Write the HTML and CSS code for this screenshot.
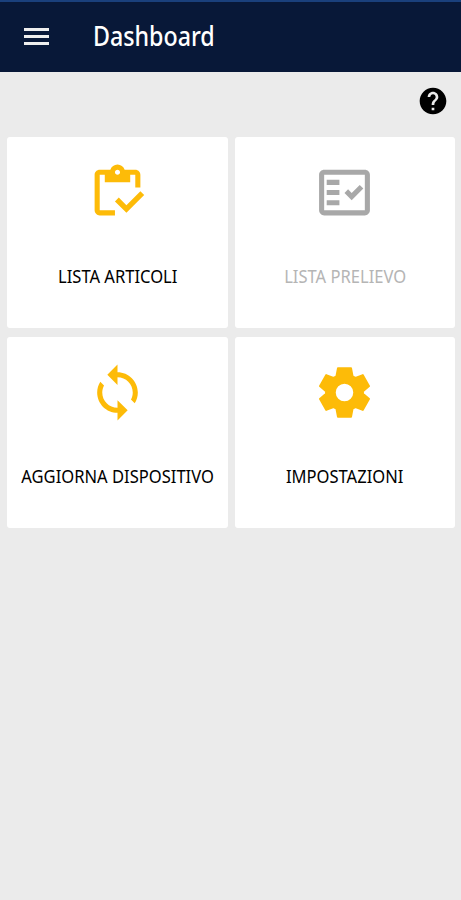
FILE: index.html
```html
<!DOCTYPE html>
<html lang="it">
<head>
    <meta charset="UTF-8">
    <meta name="viewport" content="width=device-width, initial-scale=1.0">
    <title>Dashboard</title>
    <link rel="stylesheet" href="styles.css">
</head>
<body>
    <header class="topbar">
        <button class="menu" aria-label="Menu">
            <span></span>
            <span></span>
            <span></span>
        </button>
        <h1>Dashboard</h1>
    </header>

    <div class="help">
        <svg viewBox="0 0 24 24"><path d="M12 2C6.48 2 2 6.48 2 12s4.48 10 10 10 10-4.48 10-10S17.52 2 12 2zm1 17h-2v-2h2v2zm2.07-7.75l-.9.92C13.45 12.9 13 13.5 13 15h-2v-.5c0-1.1.45-2.1 1.17-2.83l1.24-1.26c.37-.36.59-.86.59-1.41 0-1.1-.9-2-2-2s-2 .9-2 2H8c0-2.21 1.79-4 4-4s4 1.79 4 4c0 .88-.36 1.68-.93 2.25z"/></svg>
    </div>

    <main class="grid">
        <a class="card">
            <svg viewBox="0 0 24 24">
                <path d="M5 5h2v3h10V5h2v5h2V5c0-1.1-.9-2-2-2h-4.18C14.4 1.84 13.3 1 12 1s-2.4.84-2.82 2H5c-1.1 0-2 .9-2 2v14c0 1.1.9 2 2 2h6v-2H5V5zm7-2c.55 0 1 .45 1 1s-.45 1-1 1-1-.45-1-1 .45-1 1-1z"/>
                <path d="M21 11.5L15.51 17l-3.01-3-1.5 1.5 4.51 4.5 6.99-7z"/>
            </svg>
            <span class="label">LISTA ARTICOLI</span>
        </a>
        <a class="card disabled">
            <svg viewBox="0 0 24 24">
                <path d="M20 3H4c-1.1 0-2 .9-2 2v14c0 1.1.9 2 2 2h16c1.1 0 2-.9 2-2V5c0-1.1-.9-2-2-2zm0 16H4V5h16v14z"/>
                <path d="M19.41 10.42L17.99 9l-3.17 3.17-1.41-1.42L12 12.16 14.82 15z"/>
                <path d="M5 7h5v2H5zM5 11h5v2H5zM5 15h5v2H5z"/>
            </svg>
            <span class="label">LISTA PRELIEVO</span>
        </a>
        <a class="card">
            <svg viewBox="0 0 24 24"><path d="M12 4V1L8 5l4 4V6c3.31 0 6 2.69 6 6 0 1.01-.25 1.97-.7 2.8l1.46 1.46C19.54 15.03 20 13.57 20 12c0-4.42-3.58-8-8-8zm0 14c-3.31 0-6-2.69-6-6 0-1.01.25-1.97.7-2.8L5.24 7.74C4.46 8.97 4 10.43 4 12c0 4.42 3.58 8 8 8v3l4-4-4-4v3z"/></svg>
            <span class="label">AGGIORNA DISPOSITIVO</span>
        </a>
        <a class="card">
            <svg class="gear" viewBox="0 0 24 24"><path fill-rule="evenodd" d="M9.4 2.4h5.2l.6 3.2 1.1.6 2.9-1.1 2.5 4.4-2.4 2v1l2.4 2-2.5 4.4-2.9-1.1-1.1.6-.6 3.2H9.4l-.6-3.2-1.1-.6-2.9 1.1-2.5-4.4 2.4-2v-1l-2.4-2 2.5-4.4 2.9 1.1 1.1-.6zM12 8.2a3.8 3.8 0 1 0 0 7.6 3.8 3.8 0 0 0 0-7.6z"/></svg>
            <span class="label">IMPOSTAZIONI</span>
        </a>
    </main>
</body>
</html>
```
FILE: styles.css
```css
* {
    box-sizing: border-box;
}
body {
    margin: 0;
    min-height: 100vh;
    background-color: #ebebeb;
    font-family: "Noto Sans", "Open Sans", sans-serif;
}
.topbar {
    display: flex;
    align-items: center;
    height: 72px;
    padding: 0 0 2px 24px;
    border-top: 2px solid #1a407c;
    background-color: #081838;
    color: #fff;
}
.menu {
    display: flex;
    flex-direction: column;
    gap: 4px;
    width: 25px;
    margin-right: 44px;
    padding: 0;
    border: none;
    background: none;
}
.menu span {
    height: 3px;
    background-color: #eee;
}
.topbar h1 {
    margin: 0;
    font-size: 27px;
    font-weight: 500;
    line-height: 36px;
    transform: scaleX(0.86);
    transform-origin: left;
}
.help {
    display: flex;
    justify-content: flex-end;
    height: 65px;
    padding: 13px 12px 0 0;
}
.help svg {
    width: 32px;
    height: 32px;
}
.grid {
    display: grid;
    grid-template-columns: 1fr 1fr;
    grid-auto-rows: 191px;
    gap: 9px 7px;
    padding: 0 6px 0 7px;
}
.card {
    display: flex;
    flex-direction: column;
    align-items: center;
    padding-top: 25px;
    border-radius: 3px;
    background-color: #fff;
    color: #000;
}
.card svg {
    width: 61px;
    height: 61px;
    fill: #fdbb08;
}
.card .gear {
    stroke: #fdbb08;
    stroke-width: 0.7;
    stroke-linejoin: round;
}
.label {
    margin-top: 40px;
    font-size: 18.5px;
    line-height: 26px;
    white-space: nowrap;
    transform: scaleX(0.895);
}
.card.disabled {
    color: #b5b5b5;
}
.card.disabled svg {
    fill: #a8a8a8;
}
```
